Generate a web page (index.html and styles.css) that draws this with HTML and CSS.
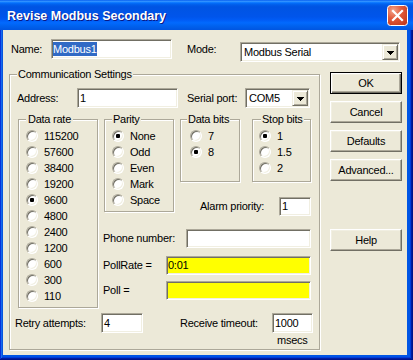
FILE: index.html
```html
<!DOCTYPE html>
<html>
<head>
<meta charset="utf-8">
<link rel="stylesheet" href="styles.css">
</head>
<body>
<div class="window">
  <div class="titlebar">
    <span class="title">Revise Modbus Secondary</span>
    <span class="close"><svg width="21" height="21" viewBox="0 0 21 21"><defs><radialGradient id="cg" cx="0.3" cy="0.25" r="0.9"><stop offset="0" stop-color="#F3A58C"/><stop offset="0.45" stop-color="#E25A3B"/><stop offset="1" stop-color="#C2391B"/></radialGradient></defs><rect x="0.5" y="0.5" width="20" height="20" rx="3" fill="url(#cg)" stroke="#fff"/><path d="M6 6L15 15M15 6L6 15" stroke="#fff" stroke-width="2.2" stroke-linecap="square"/></svg></span>
  </div>
  <div class="client">
    <div class="top-row">
      <span class="lbl w-name">Name:</span>
      <div class="field w-namefield"><span class="sel">Modbus1</span></div>
      <span class="lbl w-mode">Mode:</span>
      <div class="field combo w-modecombo"><span class="ctext">Modbus Serial</span><span class="drop"><svg width="7" height="4" viewBox="0 0 7 4"><path d="M0 0h7v1H0zM1 1h5v1H1zM2 2h3v1H2zM3 3h1v1H3z" fill="#000"/></svg></span></div>
    </div>
    <div class="main-row">
      <fieldset class="group comm">
        <legend>Communication Settings</legend>
        <div class="addr-row">
          <span class="lbl w-addr">Address:</span>
          <div class="field w-addrfield">1</div>
          <span class="lbl w-serial">Serial port:</span>
          <div class="field combo w-serialcombo"><span class="ctext">COM5</span><span class="drop"><svg width="7" height="4" viewBox="0 0 7 4"><path d="M0 0h7v1H0zM1 1h5v1H1zM2 2h3v1H2zM3 3h1v1H3z" fill="#000"/></svg></span></div>
        </div>
        <div class="groups-row">
          <fieldset class="group rate">
            <legend>Data rate</legend>
            <div class="opt"><span class="radio"></span>115200</div>
            <div class="opt"><span class="radio"></span>57600</div>
            <div class="opt"><span class="radio"></span>38400</div>
            <div class="opt"><span class="radio"></span>19200</div>
            <div class="opt"><span class="radio on"></span>9600</div>
            <div class="opt"><span class="radio"></span>4800</div>
            <div class="opt"><span class="radio"></span>2400</div>
            <div class="opt"><span class="radio"></span>1200</div>
            <div class="opt"><span class="radio"></span>600</div>
            <div class="opt"><span class="radio"></span>300</div>
            <div class="opt"><span class="radio"></span>110</div>
          </fieldset>
          <div class="right-area">
            <div class="upper">
              <fieldset class="group parity">
                <legend>Parity</legend>
                <div class="opt"><span class="radio on"></span>None</div>
                <div class="opt"><span class="radio"></span>Odd</div>
                <div class="opt"><span class="radio"></span>Even</div>
                <div class="opt"><span class="radio"></span>Mark</div>
                <div class="opt"><span class="radio"></span>Space</div>
              </fieldset>
              <div class="bits-col">
                <div class="bits-row">
                  <fieldset class="group databits">
                    <legend>Data bits</legend>
                    <div class="opt"><span class="radio"></span>7</div>
                    <div class="opt"><span class="radio on"></span>8</div>
                  </fieldset>
                  <fieldset class="group stopbits">
                    <legend>Stop bits</legend>
                    <div class="opt"><span class="radio on"></span>1</div>
                    <div class="opt"><span class="radio"></span>1.5</div>
                    <div class="opt"><span class="radio"></span>2</div>
                  </fieldset>
                </div>
                <div class="alarm-row">
                  <span class="lbl w-alarm">Alarm priority:</span>
                  <div class="field w-alarmfield">1</div>
                </div>
              </div>
            </div>
            <div class="form-row phone-row">
              <span class="lbl w-phone">Phone number:</span>
              <div class="field w-phonefield"></div>
            </div>
            <div class="form-row pollrate-row">
              <span class="lbl w-poll">PollRate =</span>
              <div class="field yellow w-pollfield">0:01</div>
            </div>
            <div class="form-row poll-row">
              <span class="lbl w-poll">Poll =</span>
              <div class="field yellow w-pollfield"></div>
            </div>
          </div>
        </div>
        <div class="retry-row">
          <span class="lbl w-retry">Retry attempts:</span>
          <div class="field w-retryfield">4</div>
          <span class="lbl w-recv">Receive timeout:</span>
          <div class="field w-recvfield">1000</div>
        </div>
        <div class="msecs">msecs</div>
      </fieldset>
      <div class="buttons">
        <div class="btn default">OK</div>
        <div class="btn">Cancel</div>
        <div class="btn">Defaults</div>
        <div class="btn">Advanced...</div>
        <div class="btn help">Help</div>
      </div>
    </div>
  </div>
</div>
</body>
</html>
```

FILE: styles.css
```css
* { box-sizing: border-box; }
body {
  margin: 0;
  background: #fff;
  font-family: "Liberation Sans", Arial, sans-serif;
  font-size: 11px;
  line-height: 13px;
  letter-spacing: -0.25px;
  color: #000;
}
.window {
  width: 413px;
  height: 360px;
  display: flex;
  flex-direction: column;
  background: #0055E5;
  box-shadow: inset -1px -1px #00138C, inset 1px 1px #0831D9, inset -2px -2px #001EA0, inset 2px 2px #166AEE, inset -3px -3px #003BDA, inset 3px 3px #0855DD;
}
.titlebar {
  height: 30px;
  flex: none;
  display: flex;
  align-items: flex-start;
  background: linear-gradient(to bottom, #0058EE 0%, #3593FF 4%, #288EFF 6%, #127DFF 8%, #036FFC 10%, #0262EE 14%, #0057E5 20%, #0054E3 24%, #0055EB 56%, #005BF5 66%, #026AFE 76%, #0062EF 86%, #0055E0 100%);
}
.title {
  margin-top: 2px;
  padding-left: 7px;
  line-height: 28px;
  font-size: 12.5px;
  font-weight: bold;
  letter-spacing: 0;
  color: #fff;
  text-shadow: 1px 1px #0A1883;
}
.close {
  margin-left: auto;
  margin-right: 5px;
  margin-top: 5px;
  width: 21px;
  height: 21px;
  display: flex;
}
.client {
  flex: 1;
  margin: 0 6px 5px 3px;
  background: #ECE9D8;
}
.lbl { white-space: nowrap; flex: none; }
.field {
  flex: none;
  height: 20px;
  background: #fff;
  border: 1px solid;
  border-color: #ACA899 #fff #fff #ACA899;
  box-shadow: inset 1px 1px #716F64, inset -1px -1px #F1EFE2;
  padding-left: 2px;
  display: flex;
  align-items: center;
  white-space: nowrap;
}
.field.yellow { background: #FFFF00; padding-left: 1px; }
.sel {
  display: inline-block;
  background: #316AC5;
  color: #fff;
  line-height: 14px;
}
.combo { padding: 1px; }
.ctext { flex: 1; padding-left: 2px; }
.drop {
  width: 16px;
  height: 16px;
  flex: none;
  background: #ECE9D8;
  border: 1px solid;
  border-color: #F1EFE2 #716F64 #716F64 #F1EFE2;
  box-shadow: inset 1px 1px #fff, inset -1px -1px #ACA899;
  display: flex;
  align-items: center;
  justify-content: center;
}
.drop svg { display: block; margin-top: 1px; }

.top-row {
  display: flex;
  align-items: flex-start;
  padding: 9px 0 0 8px;
}
.w-name { width: 40px; line-height: 20px; }
.w-namefield { width: 121px; padding-left: 1px; }
.w-mode { width: 53px; margin-left: 15px; line-height: 20px; }
.w-modecombo { width: 160px; margin-top: 3px; }

.main-row {
  display: flex;
  align-items: flex-start;
  margin-top: 6px;
}
.group {
  margin: 0;
  min-width: 0;
  border: 1px solid #ACA899;
  box-shadow: inset 1px 1px #fff, 1px 1px #fff;
}
.group > legend {
  padding: 0 1px;
  height: 13px;
  line-height: 13px;
  background: #ECE9D8;
  white-space: nowrap;
}
.group.comm {
  width: 311px;
  height: 282px;
  margin-left: 6px;
  padding: 0 0 2px 7px;
}
.addr-row {
  display: flex;
  align-items: center;
  height: 20px;
  margin-top: 7px;
}
.w-addr { width: 60px; }
.w-addrfield { width: 101px; }
.w-serial { width: 58px; margin-left: 9px; }
.w-serialcombo { width: 65px; }

.groups-row {
  display: flex;
  align-items: flex-start;
  margin-top: 5px;
  margin-left: 1px;
}
.opt {
  display: flex;
  align-items: center;
  height: 16px;
  white-space: nowrap;
}
.radio {
  flex: none;
  width: 12px;
  height: 12px;
  margin-right: 6px;
  border-radius: 50%;
  background: #fff;
  border: 1px solid;
  border-color: #ACA899 #fff #fff #ACA899;
  box-shadow: inset 1px 1px #716F64, inset -1px -1px #F1EFE2;
  display: flex;
  align-items: center;
  justify-content: center;
}
.radio.on::after {
  content: "";
  width: 4px;
  height: 4px;
  border-radius: 1px;
  background: #000;
}
.group.rate { width: 80px; padding: 2px 0 3px 7px; }
.group.rate > legend { padding: 0 2px; }
.right-area { margin-left: 6px; width: 207px; }
.upper { display: flex; align-items: flex-start; }
.group.parity { width: 70px; padding: 2px 0 3px 7px; }
.bits-col { margin-left: 6px; width: 131px; }
.bits-row { display: flex; align-items: stretch; }
.group.databits { width: 60px; padding: 2px 0 5px 9px; }
.group.databits > legend { margin-left: -3px; }
.group.stopbits { width: 59px; margin-left: 12px; padding: 2px 0 5px 6px; }
.group.stopbits > legend { margin-left: 2px; }
.alarm-row {
  display: flex;
  align-items: center;
  height: 19px;
  margin-top: 15px;
}
.w-alarm { width: 79px; margin-left: 20px; }
.w-alarmfield { width: 32px; height: 19px; }

.form-row {
  display: flex;
  align-items: center;
  height: 19px;
  margin-left: -1px;
}
.form-row .field { height: 19px; }
.phone-row { margin-top: 13px; }
.pollrate-row { margin-top: 8px; }
.poll-row { margin-top: 6px; }
.w-phone { width: 83px; }
.w-phonefield { width: 125px; }
.w-poll { width: 63px; }
.w-pollfield { width: 145px; }

.retry-row {
  display: flex;
  align-items: center;
  height: 20px;
  margin-top: 5px;
  margin-left: -2px;
}
.w-retry { width: 86px; }
.w-retryfield { width: 42px; }
.w-recv { width: 92px; margin-left: 37px; }
.w-recvfield { width: 41px; }
.msecs { margin-left: 260px; margin-top: 1px; }

.buttons {
  display: flex;
  flex-direction: column;
  gap: 7px;
  margin-left: 10px;
  margin-top: 4px;
}
.btn {
  width: 72px;
  height: 22px;
  background: #ECE9D8;
  border: 1px solid;
  border-color: #fff #716F64 #716F64 #fff;
  box-shadow: inset -1px -1px #ACA899, inset 1px 1px #F1EFE2;
  display: flex;
  align-items: center;
  justify-content: center;
  white-space: nowrap;
}
.btn.default {
  border-color: #000;
  box-shadow: inset 1px 1px #fff, inset -1px -1px #716F64, inset -2px -2px #ACA899, inset 2px 2px #F1EFE2;
}
.btn.help { margin-top: 41px; }
```
